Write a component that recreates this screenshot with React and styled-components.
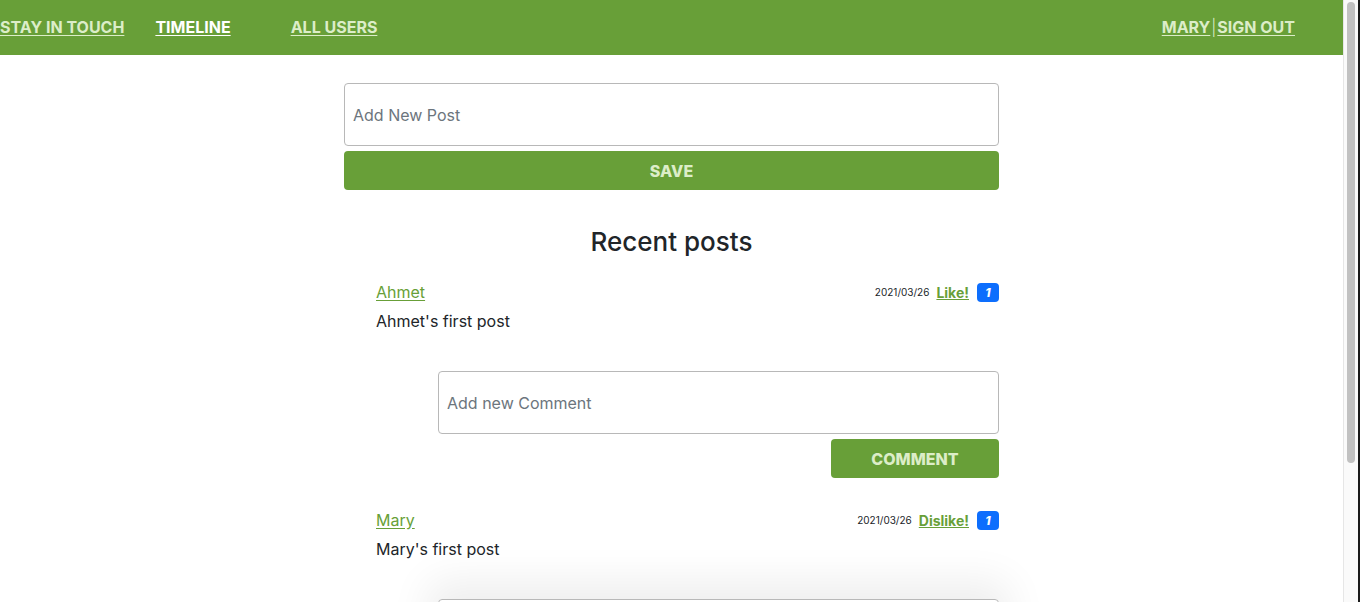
import styled, { createGlobalStyle } from "styled-components";

const GlobalStyle = createGlobalStyle`
	body {
		margin: 0;
		font-family: Inter, "Noto Sans", sans-serif;
		color: #212529;
		background: #fff;
	}
	* { box-sizing: border-box; }
`;

const green = "#689f38";
const pale = "#dcedc8";

const Page = styled.div`
	margin-right: 17px;
`;

/* scrollbar of the captured window, drawn over the right edge */
const ScrollTrack = styled.div`
	position: fixed;
	top: 0;
	right: 0;
	width: 17px;
	height: 100vh;
	background: #fafafa;
	border-left: 1px solid #e6e6e6;
	border-right: 2px solid #1a1a1a;
	padding: 2px 3px 0 3px;
`;

const ScrollThumb = styled.div`
	height: 461px;
	background: #c1c1c1;
	border-radius: 5px;
`;

const Header = styled.header`
	height: 55px;
	background: ${green};
	display: flex;
	align-items: center;
	padding: 0 48px 2px 0;
`;

const NavLink = styled.a`
	font-size: 16px;
	font-weight: 700;
	text-transform: uppercase;
	text-decoration: underline;
	text-underline-offset: 2px;
	color: ${(p) => (p.active ? "#fff" : pale)};
	margin-right: ${(p) => p.gap || 0}px;
`;

const NavRight = styled.div`
	margin-left: auto;
	display: flex;
	align-items: center;
	color: ${pale};
	font-size: 16px;
	font-weight: 700;
`;

const Sep = styled.span`
	font-weight: 300;
	margin: 0 1px;
`;

const Main = styled.main`
	width: 655px;
	margin: 0 auto;
	padding-top: 28px;
`;

const Field = styled.input`
	width: 100%;
	height: 63px;
	padding: 0 8px;
	border: 1px solid #b8b8b8;
	border-radius: 4px;
	font-family: inherit;
	font-size: 16px;
	color: #212529;
	&::placeholder { color: #6c757d; }
`;

const GreenButton = styled.button`
	display: block;
	width: ${(p) => p.width || "100%"};
	height: 39px;
	margin: 5px 0 0 auto;
	border: 0;
	border-radius: 4px;
	background: ${green};
	color: ${pale};
	font-family: inherit;
	font-size: 16px;
	font-weight: 800;
	text-transform: uppercase;
`;

const Title = styled.h2`
	margin: 36px 0 0;
	text-align: center;
	font-size: 26px;
	font-weight: 500;
	line-height: 32px;
`;

const Post = styled.section`
	margin: ${(p) => p.top}px 0 0 32px;
`;

const PostHead = styled.div`
	display: flex;
	align-items: center;
	height: 20px;
`;

const Author = styled.a`
	color: ${green};
	font-size: 16px;
	text-decoration: underline;
	text-underline-offset: 2px;
`;

const Meta = styled.div`
	margin-left: auto;
	display: flex;
	align-items: center;
`;

const Date = styled.span`
	font-size: 10px;
	margin-right: 7px;
`;

const Like = styled.a`
	color: ${green};
	font-size: 14px;
	font-weight: 700;
	text-decoration: underline;
	margin-right: 8px;
`;

const Badge = styled.span`
	display: inline-flex;
	align-items: center;
	justify-content: center;
	width: 22px;
	height: 19px;
	border-radius: 4px;
	background: #0d6efd;
	color: #fff;
	font-size: 12px;
	font-weight: 800;
	font-style: italic;
`;

const Body = styled.p`
	margin: 7px 0 0;
	font-size: 16px;
	line-height: 24px;
`;

const CommentForm = styled.div`
	margin: 38px 0 0 62px;
	border-radius: 4px;
	box-shadow: ${(p) => (p.shadow ? "0 -8px 40px 10px rgba(0,0,0,0.07)" : "none")};
`;

const posts = [
	{ name: "Ahmet", text: "Ahmet's first post", action: "Like!", top: 24 },
	{ name: "Mary", text: "Mary's first post", action: "Dislike!", top: 32, shadow: true },
];

export default function App() {
	return (
		<>
			<GlobalStyle />
			<Page>
				<Header>
					<NavLink gap={31}>Stay in touch</NavLink>
					<NavLink active gap={60}>Timeline</NavLink>
					<NavLink>All users</NavLink>
					<NavRight>
						<NavLink>Mary</NavLink>
						<Sep>|</Sep>
						<NavLink>Sign out</NavLink>
					</NavRight>
				</Header>
				<Main>
					<Field placeholder="Add New Post" />
					<GreenButton>Save</GreenButton>
					<Title>Recent posts</Title>
					{posts.map((p) => (
						<Post key={p.name} top={p.top}>
							<PostHead>
								<Author>{p.name}</Author>
								<Meta>
									<Date>2021/03/26</Date>
									<Like>{p.action}</Like>
									<Badge>1</Badge>
								</Meta>
							</PostHead>
							<Body>{p.text}</Body>
							<CommentForm shadow={p.shadow}>
								<Field placeholder="Add new Comment" />
								<GreenButton width="168px">Comment</GreenButton>
							</CommentForm>
						</Post>
					))}
				</Main>
			</Page>
			<ScrollTrack>
				<ScrollThumb />
			</ScrollTrack>
		</>
	);
}
